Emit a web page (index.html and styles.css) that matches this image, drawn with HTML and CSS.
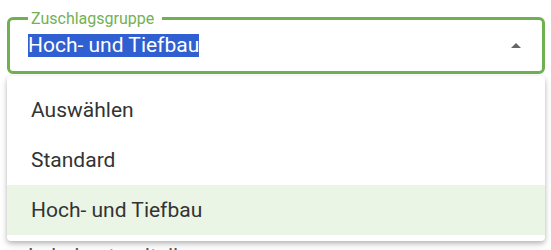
FILE: index.html
```html
<!DOCTYPE html>
<html lang="de">
<head>
<meta charset="utf-8">
<link rel="stylesheet" href="styles.css">
</head>
<body>
<div class="page">
  <div class="select-wrap">
    <fieldset class="field">
      <legend class="label">Zuschlagsgruppe</legend>
      <div class="field-row">
        <span class="value">Hoch- und Tiefbau</span>
        <span class="arrow"></span>
      </div>
    </fieldset>
    <ul class="menu">
      <li class="item">Auswählen</li>
      <li class="item">Standard</li>
      <li class="item selected">Hoch- und Tiefbau</li>
    </ul>
  </div>
  <p class="below">Lohnbestandteile</p>
</div>
</body>
</html>
```
FILE: styles.css
```css
html, body {
  margin: 0;
  padding: 0;
  background: #ffffff;
  overflow: hidden;
}
body {
  font-family: Roboto, "Liberation Sans", sans-serif;
  width: 551px;
  height: 250px;
}
.page {
  padding: 9px 6px 0 7px;
}
.select-wrap {
  position: relative;
}
.field {
  margin: 0;
  border: 3px solid #6fb050;
  border-radius: 6px;
  padding: 6px 0 14px 18px;
  min-width: 0;
}
.label {
  font-size: 16px;
  line-height: 19px;
  color: #72b155;
  padding: 0 8px 0 3px;
  margin-left: 0;
}
.field-row {
  display: flex;
  align-items: center;
  justify-content: space-between;
  padding-right: 21px;
}
.value {
  font-size: 21px;
  line-height: 23px;
  background: #2f5fd0;
  color: #ffffff;
}
.arrow {
  width: 0;
  height: 0;
  border-left: 5px solid transparent;
  border-right: 5px solid transparent;
  border-bottom: 5px solid #666666;
}
.menu {
  position: absolute;
  left: 0;
  right: 0;
  top: 100%;
  margin: 2px 0 0;
  padding: 9px 0 6px;
  list-style: none;
  background: #ffffff;
  border-radius: 4px;
  box-shadow: 0 2px 4px rgba(0,0,0,0.2), 0 4px 8px rgba(0,0,0,0.12);
  z-index: 2;
}
.item {
  height: 50px;
  display: flex;
  align-items: center;
  padding-left: 24px;
  font-size: 21px;
  color: #333333;
}
.item.selected {
  background: #ebf5e6;
}
.below {
  margin: 0;
  padding: 170px 0 0 21px;
  font-size: 21px;
  color: #555555;
}
```
